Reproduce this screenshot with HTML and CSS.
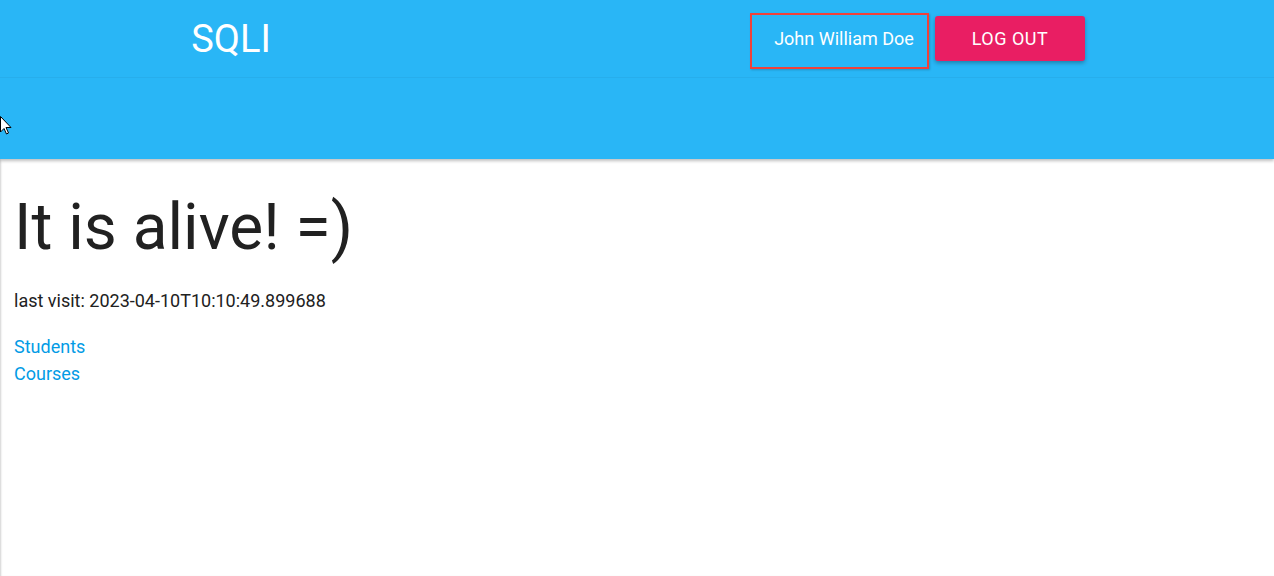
FILE: index.html
```html
<!DOCTYPE html>
<html>
<head>
<meta charset="utf-8">
<link rel="stylesheet" href="styles.css">
</head>
<body>
<div class="page">
  <header class="appbar">
    <div class="bar-top">
      <div class="brand">SQLI</div>
      <div class="actions">
        <div class="user">John William Doe</div>
        <button class="logout">LOG OUT</button>
      </div>
    </div>
    <div class="bar-bottom"></div>
  </header>
  <main class="content">
    <h1 class="headline">It is alive! =)</h1>
    <p class="visit">last visit: 2023-04-10T10:10:49.899688</p>
    <nav class="links">
      <a href="#" class="link">Students</a>
      <a href="#" class="link">Courses</a>
    </nav>
  </main>
  <svg class="cursor" width="12" height="19" viewBox="0 0 12 19"><path d="M0.5 0.5 L0.5 16 L4 12.5 L6.5 18 L8.5 17 L6 11.5 L11 11.5 Z" fill="#fff" stroke="#000" stroke-width="1"/></svg>
</div>
</body>
</html>
```
FILE: styles.css
```css
* { box-sizing: border-box; }
html, body { margin: 0; padding: 0; }
body {
  font-family: Roboto, "Noto Sans", sans-serif;
  background: #fff;
  color: #212121;
}
.page {
  position: relative;
  min-height: 576px;
  box-shadow: inset 2px 0 2px -1px rgba(0,0,0,0.18);
}
.appbar {
  background: #29b6f6;
  box-shadow: 0 2px 3px rgba(0,0,0,0.25);
  position: relative;
  z-index: 1;
}
.bar-top {
  height: 78px;
  border-bottom: 1px solid rgba(0,0,0,0.04);
  display: flex;
  align-items: center;
}
.brand {
  width: 462px;
  text-align: center;
  color: #fff;
  font-size: 38px;
  font-weight: 400;
}
.actions {
  margin-left: 288px;
  display: flex;
  align-items: center;
  gap: 6px;
}
.user {
  height: 56px;
  width: 179px;
  margin-top: 5px;
  border: 2px solid #f0413a;
  color: #fff;
  font-size: 18px;
  display: flex;
  align-items: center;
  justify-content: center;
  padding-left: 9px;
  padding-bottom: 5px;
  box-shadow: 1px 1px 2px rgba(0,0,0,0.2);
}
.logout {
  width: 150px;
  height: 45px;
  border: none;
  border-radius: 3px;
  background: #e91e63;
  color: #fff;
  font-family: Roboto, sans-serif;
  font-size: 18px;
  letter-spacing: 0.5px;
  box-shadow: 0 2px 4px rgba(0,0,0,0.3);
}
.bar-bottom {
  height: 81px;
}
.content {
  padding: 0 14px;
}
.headline {
  margin: 29px 0 0;
  font-size: 64px;
  font-weight: 400;
  line-height: 80px;
  color: #212121;
}
.visit {
  margin: 23px 0 0;
  font-size: 18px;
  line-height: 20px;
}
.links {
  margin-top: 22px;
  display: flex;
  flex-direction: column;
}
.link {
  color: #039be5;
  text-decoration: none;
  font-size: 18px;
  line-height: 27px;
}
.cursor {
  position: absolute;
  left: 0;
  top: 116px;
  z-index: 2;
}
```
